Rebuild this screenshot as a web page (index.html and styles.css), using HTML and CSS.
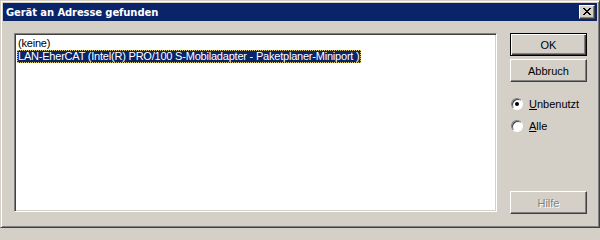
FILE: index.html
```html
<!DOCTYPE html>
<html>
<head>
<meta charset="utf-8">
<link rel="stylesheet" href="styles.css">
</head>
<body>
<div class="window">
  <div class="titlebar">
    <span class="title">Gerät an Adresse gefunden</span>
    <span class="close"><svg width="8" height="7" viewBox="0 0 8 7"><path d="M0 0h2v1h-2zM6 0h2v1h-2zM1 1h2v1h-2zM5 1h2v1h-2zM2 2h4v1h-4zM3 3h2v1h-2zM2 4h4v1h-4zM1 5h2v1h-2zM5 5h2v1h-2zM0 6h2v1h-2zM6 6h2v1h-2z" fill="#000"/></svg></span>
  </div>
  <div class="body">
    <div class="listbox">
      <div class="item">(keine)</div>
      <div class="item"><span class="sel">LAN-EherCAT (Intel(R) PRO/100 S-Mobiladapter - Paketplaner-Miniport )</span></div>
    </div>
    <div class="side">
      <div class="btn default"><span>OK</span></div>
      <div class="btn abbruch"><span>Abbruch</span></div>
      <div class="radios">
        <div class="radio"><span class="circle checked"></span><span><u>U</u>nbenutzt</span></div>
        <div class="radio"><span class="circle"></span><span><u>A</u>lle</span></div>
      </div>
      <div class="btn disabled"><span>Hilfe</span></div>
    </div>
  </div>
</div>
</body>
</html>
```
FILE: styles.css
```css
html, body {
  margin: 0;
  padding: 0;
  background: #d4d0c8;
}
.window {
  width: 600px;
  height: 228px;
  box-sizing: border-box;
  border: 1px solid;
  border-color: #d4d0c8 #404040 #404040 #d4d0c8;
  box-shadow: inset 1px 1px #ffffff, inset -1px -1px #808080;
  padding: 2px;
  background: #d4d0c8;
  font-family: "Liberation Sans", Arial, sans-serif;
  font-size: 11px;
  color: #000;
  display: flex;
  flex-direction: column;
}
.titlebar {
  height: 18px;
  background: #0a246a;
  display: flex;
  align-items: center;
  justify-content: space-between;
  padding: 0 2px 0 3px;
}
.title {
  color: #fff;
  font-family: "DejaVu Sans", Verdana, sans-serif;
  font-weight: bold;
  font-size: 10px;
  letter-spacing: -0.1px;
}
.close {
  width: 16px;
  height: 14px;
  box-sizing: border-box;
  background: #d4d0c8;
  border: 1px solid;
  border-color: #ffffff #404040 #404040 #ffffff;
  box-shadow: inset -1px -1px #808080;
  display: flex;
  align-items: center;
  justify-content: center;
  padding: 0 1px 1px 0;
}
.close svg { display: block; }
.body {
  display: flex;
  padding: 12px 0 0 11px;
  gap: 13px;
}
.listbox {
  width: 483px;
  height: 179px;
  box-sizing: border-box;
  background: #fff;
  border: 1px solid;
  border-color: #808080 #ffffff #ffffff #808080;
  box-shadow: inset 1px 1px #404040, inset -1px -1px #d4d0c8;
  padding: 3px 2px;
}
.item {
  height: 13px;
  line-height: 13px;
  padding-left: 1px;
  white-space: nowrap;
  letter-spacing: -0.21px;
}
.sel {
  display: inline-block;
  background: #0a246a;
  color: #fff;
  outline: 1px dotted #d8c878;
  outline-offset: -1px;
  padding: 0 1px 0 1px;
  margin-left: -1px;
}
.side {
  display: flex;
  flex-direction: column;
  width: 77px;
  height: 181px;
}
.btn {
  height: 23px;
  flex: none;
  box-sizing: border-box;
  border: 1px solid;
  border-color: #ffffff #404040 #404040 #ffffff;
  box-shadow: inset -1px -1px #808080;
  display: flex;
  align-items: center;
  justify-content: center;
  font-size: 11px;
}
.btn.default {
  border-color: #000;
  box-shadow: inset 1px 1px #ffffff, inset -1px -1px #404040, inset -2px -2px #808080;
}
.btn.abbruch {
  margin-top: 3px;
}
.btn.disabled {
  margin-top: auto;
  color: #808080;
  text-shadow: 1px 1px #ffffff;
}
.radios {
  display: flex;
  flex-direction: column;
  gap: 9px;
  margin-top: 15px;
}
.radio {
  display: flex;
  align-items: center;
  gap: 6px;
  height: 13px;
}
.circle {
  width: 12px;
  height: 12px;
  box-sizing: border-box;
  border-radius: 50%;
  background: #fff;
  border: 1px solid;
  border-color: #808080 #ffffff #ffffff #808080;
  box-shadow: inset 1px 1px #404040;
  position: relative;
  margin-left: 1px;
}
.circle.checked::after {
  content: "";
  position: absolute;
  left: 3px;
  top: 3px;
  width: 4px;
  height: 4px;
  border-radius: 50%;
  background: #000;
}
```
